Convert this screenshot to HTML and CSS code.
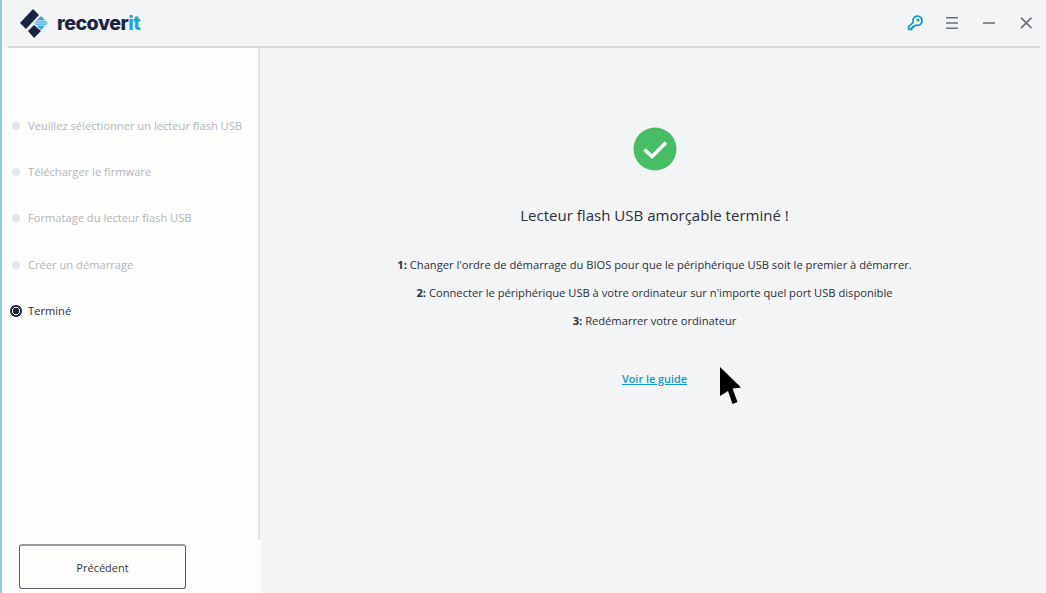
FILE: index.html

```html
<!DOCTYPE html>
<html lang="fr">
<head>
  <meta charset="UTF-8" />
  <meta name="viewport" content="width=device-width, initial-scale=1" />
  <title>Recoverit</title>
  <link rel="stylesheet" href="styles.css">
</head>
<body>

<div class="app">
  <header class="topbar">
    <div class="brand">
      <svg class="logo" width="30" height="30" viewBox="0 0 30 30">
        <polygon points="1,15 14,1 20,7 7,21" fill="#17233f"/>
        <polygon points="9,23 15,17 22,23 15,30" fill="#17233f"/>
        <polygon points="22,8 29,15 22,22 15,15" fill="#35a9dc"/>
        <path d="M16 12.8h11M15 15h14M16 17.2h11" stroke="#e6f3f9" stroke-width="0.9"/>
      </svg>
      <span class="brand-name">recover<span class="brand-it">it</span></span>
    </div>
    <div class="win-tools">
      <svg class="tool" width="18" height="18" viewBox="0 0 18 18" fill="none" stroke="#0f9bcb" stroke-width="1.7">
        <path d="M7.2 8.4a4.6 4.6 0 1 1 2.6 2.6L8.4 12.4H6.9v1.5H5.4v1.5H2.6v-2.8z" stroke-linejoin="round"/>
        <circle cx="12" cy="6" r="1" stroke-width="1.2"/>
      </svg>
      <svg class="tool" width="18" height="18" viewBox="0 0 18 18" stroke="#6b7078" stroke-width="1.6">
        <path d="M3 3.7h12M3 9h12M3 14.3h12"/>
      </svg>
      <svg class="tool" width="18" height="18" viewBox="0 0 18 18" stroke="#6b7078" stroke-width="1.6">
        <path d="M3 9h12"/>
      </svg>
      <svg class="tool" width="18" height="18" viewBox="0 0 18 18" stroke="#6b7078" stroke-width="1.6">
        <path d="M4 3.6l10.5 10.5M14.5 3.6L4 14.1"/>
      </svg>
    </div>
  </header>

  <div class="main">
    <aside class="sidebar">
      <ul class="steps">
        <li class="step">Veuillez sélectionner un lecteur flash USB</li>
        <li class="step">Télécharger le firmware</li>
        <li class="step">Formatage du lecteur flash USB</li>
        <li class="step">Créer un démarrage</li>
        <li class="step current">Terminé</li>
      </ul>
      <button class="btn-prev">Précédent</button>
    </aside>

    <section class="content">
      <svg class="ok-icon" width="44" height="44" viewBox="0 0 44 44">
        <circle cx="22" cy="22" r="21.5" fill="#47bd65"/>
        <path d="M11.5 22.5l7.5 7L33 15.5" fill="none" stroke="#fff" stroke-width="3.6"/>
      </svg>
      <h1 class="title">Lecteur flash USB amorçable terminé !</h1>
      <p class="line"><b>1:</b> Changer l'ordre de démarrage du BIOS pour que le périphérique USB soit le premier à démarrer.</p>
      <p class="line"><b>2:</b> Connecter le périphérique USB à votre ordinateur sur n'importe quel port USB disponible</p>
      <p class="line"><b>3:</b> Redémarrer votre ordinateur</p>
      <a class="guide" href="#">Voir le guide</a>
    </section>
  </div>

  <svg class="cursor" width="24" height="40" viewBox="0 0 24 40">
    <path d="M1 1L22 21.5L13.5 22.5L18.5 36L13.5 38L9 25L1 30Z" fill="#000"/>
  </svg>
</div>

</body>
</html>
```

FILE: styles.css

```css
* {
  box-sizing: border-box;
}
html, body {
  margin: 0;
  padding: 0;
  height: 100%;
  overflow: hidden;
}
body {
  font-family: 'Open Sans', sans-serif;
  background: #f3f4f6;
  color: #2b303a;
}
.app {
  position: relative;
  height: 593px;
  border-left: 2px solid #8ecde0;
  display: flex;
  flex-direction: column;
}
.topbar {
  height: 48px;
  margin: 0 6px;
  padding: 0 5px 0 11px;
  border-bottom: 2px solid #d7d8da;
  display: flex;
  align-items: center;
  justify-content: space-between;
}
.brand {
  display: flex;
  align-items: center;
  gap: 8px;
}
.brand-name {
  font-family: 'Inter', sans-serif;
  font-size: 19.6px;
  font-weight: 800;
  letter-spacing: -0.5px;
  color: #1a2440;
}
.brand-it {
  color: #1fa5dc;
}
.win-tools {
  display: flex;
  gap: 19px;
}
.tool {
  display: block;
}
.main {
  flex: 1;
  display: flex;
  min-height: 0;
}
.sidebar {
  width: 258px;
  background: #fdfdfc;
  border-right: 2px solid #e4e5e8;
  padding: 55px 0 0 6px;
  position: relative;
}
.sidebar::after {
  content: "";
  position: absolute;
  right: -3px;
  bottom: 0;
  width: 3px;
  height: 53px;
  background: #fdfdfc;
}
.steps {
  list-style: none;
  margin: 0;
  padding: 0;
}
.step {
  height: 46.2px;
  line-height: 46px;
  padding-left: 20px;
  font-size: 11.15px;
  color: #b3b6ba;
  position: relative;
  white-space: nowrap;
}
.step::before {
  content: "";
  position: absolute;
  left: 4px;
  top: 19px;
  width: 8px;
  height: 8px;
  border-radius: 50%;
  background: #dfe7ec;
}
.step.current {
  color: #2b303a;
}
.step.current::before {
  left: 2px;
  top: 17px;
  width: 12px;
  height: 12px;
  background: radial-gradient(circle, #17203a 0 3px, #fff 3px 4px, #17203a 4px);
}
.btn-prev {
  position: absolute;
  left: 17px;
  bottom: 4px;
  width: 167px;
  height: 45px;
  background: #fdfdfc;
  border: 1px solid #5d6066;
  border-top-width: 2px;
  border-top-color: #9a9b9e;
  border-radius: 3px;
  font-family: 'Open Sans', sans-serif;
  font-size: 11px;
  color: #33373e;
}
.content {
  flex: 1;
  display: flex;
  flex-direction: column;
  align-items: center;
  padding: 79px 0 0 3px;
}
.ok-icon {
  display: block;
}
.title {
  margin: 34px 0 32px;
  font-size: 15.05px;
  line-height: 20px;
  font-weight: 400;
  color: #2b303a;
}
.line {
  margin: 0 0 12px;
  font-size: 11.16px;
  line-height: 16px;
  color: #2b303a;
}
.guide {
  margin-top: 30px;
  font-size: 10.9px;
  font-weight: 600;
  color: #149ac9;
}
.cursor {
  position: absolute;
  left: 717px;
  top: 366px;
}
```
